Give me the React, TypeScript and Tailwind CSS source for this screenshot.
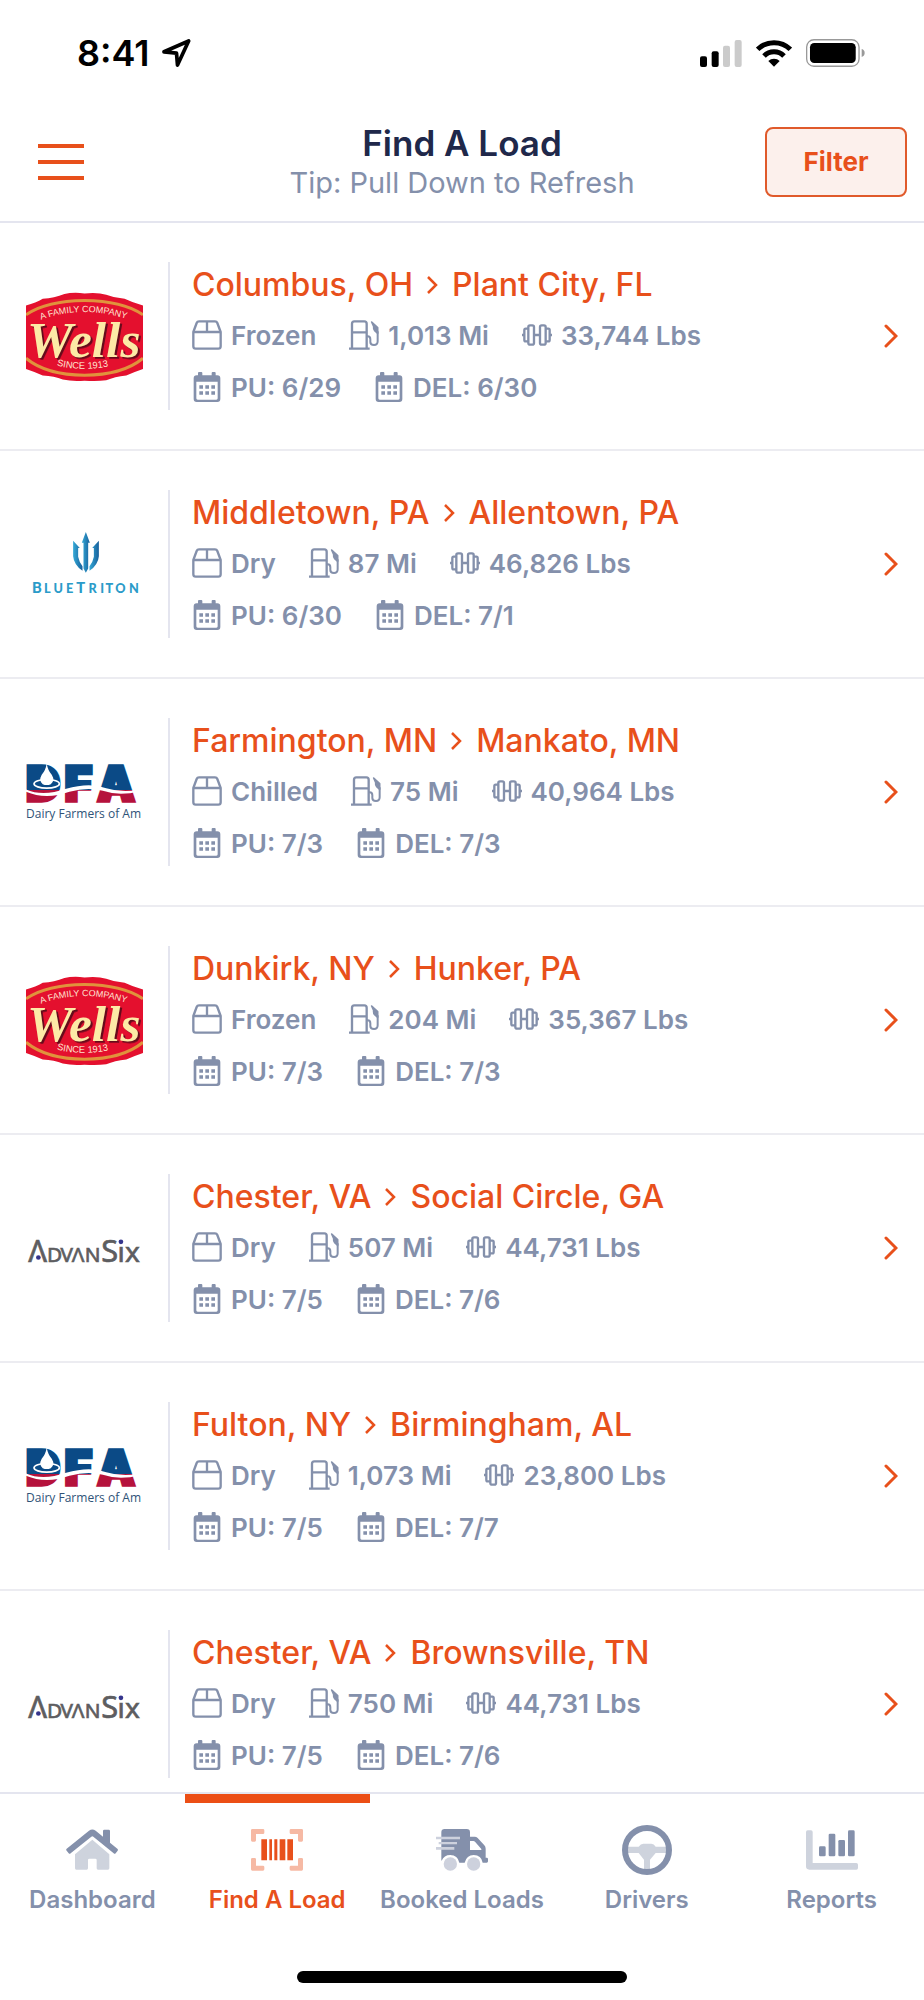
import type { ReactNode } from "react"

type Brand = "wells" | "bluetriton" | "dfa" | "advansix"

interface Load {
  brand: Brand
  from: string
  to: string
  kind: string
  miles: string
  weight: string
  pickup: string
  delivery: string
}

const loads: Load[] = [
  { brand: "wells", from: "Columbus, OH", to: "Plant City, FL", kind: "Frozen", miles: "1,013", weight: "33,744", pickup: "6/29", delivery: "6/30" },
  { brand: "bluetriton", from: "Middletown, PA", to: "Allentown, PA", kind: "Dry", miles: "87", weight: "46,826", pickup: "6/30", delivery: "7/1" },
  { brand: "dfa", from: "Farmington, MN", to: "Mankato, MN", kind: "Chilled", miles: "75", weight: "40,964", pickup: "7/3", delivery: "7/3" },
  { brand: "wells", from: "Dunkirk, NY", to: "Hunker, PA", kind: "Frozen", miles: "204", weight: "35,367", pickup: "7/3", delivery: "7/3" },
  { brand: "advansix", from: "Chester, VA", to: "Social Circle, GA", kind: "Dry", miles: "507", weight: "44,731", pickup: "7/5", delivery: "7/6" },
  { brand: "dfa", from: "Fulton, NY", to: "Birmingham, AL", kind: "Dry", miles: "1,073", weight: "23,800", pickup: "7/5", delivery: "7/7" },
  { brand: "advansix", from: "Chester, VA", to: "Brownsville, TN", kind: "Dry", miles: "750", weight: "44,731", pickup: "7/5", delivery: "7/6" },
]

function BoxIcon() {
  return (
    <svg viewBox="0 0 90 90" className="size-[30px] shrink-0" fill="none" stroke="currentColor" strokeWidth="7" strokeLinejoin="round" aria-hidden="true">
      <path d="M4 36 L14 9 Q16 4 21 4 H69 Q74 4 76 9 L86 36 V79 Q86 86 79 86 H11 Q4 86 4 79 Z" />
      <path d="M4 36 H86 M45 4 V36" />
    </svg>
  )
}

function FuelIcon() {
  return (
    <svg viewBox="0 0 90 90" className="size-[30px] shrink-0" fill="none" stroke="currentColor" strokeWidth="7" strokeLinejoin="round" aria-hidden="true">
      <path d="M9 86 V11 Q9 4 16 4 H46 Q53 4 53 11 V86 M9 37 H53 M0 86 H62" />
      <path d="M53 49 H56 Q64 49 64 58 V66 Q64 75 75 75 Q86 75 86 64 V34" strokeWidth="6" />
      <path d="M68 6 L86 23 V40 L77 32 Q73 28 74 19 Z" fill="currentColor" strokeWidth="5" />
    </svg>
  )
}

function WeightIcon() {
  return (
    <svg viewBox="0 0 90 90" className="size-[30px] shrink-0" fill="none" stroke="currentColor" strokeWidth="7" aria-hidden="true">
      <rect x="19" y="16" width="17" height="58" rx="5" />
      <rect x="54" y="16" width="17" height="58" rx="5" />
      <path d="M19 26 H11 Q7 26 7 31 V59 Q7 64 11 64 H19 M71 26 H79 Q83 26 83 31 V59 Q83 64 79 64 H71 M0 45 H7 M36 45 H54 M83 45 H90" />
    </svg>
  )
}

function CalendarIcon() {
  return (
    <svg viewBox="0 0 90 90" className="size-[30px] shrink-0" fill="currentColor" aria-hidden="true">
      <path
        fillRule="evenodd"
        d="M22 0 h6 q3 0 3 3 v7 h28 v-7 q0 -3 3 -3 h6 q3 0 3 3 v7 h5 q9 0 9 9 v62 q0 9 -9 9 h-62 q-9 0 -9 -9 v-62 q0 -9 9 -9 h4 v-7 q0 -3 3 -3 Z M13 29 V79 q0 4 4 4 h56 q4 0 4 -4 V29 Z"
      />
      <path d="M22 40 h11 v10 h-11Z M40 40 h11 v10 h-11Z M58 40 h11 v10 h-11Z M22 58 h11 v10 h-11Z M40 58 h11 v10 h-11Z M58 58 h11 v10 h-11Z" />
    </svg>
  )
}

function WellsLogo() {
  return (
    <svg viewBox="0 0 350 350" className="size-full" role="img" aria-label="Wells">
      <defs>
        <path id="wells-top" d="M45 125 Q175 76 325 130" />
        <path id="wells-bottom" d="M92 262 Q172 282 270 260" />
      </defs>
      <path fill="#e4102e" d="M0 82 Q30 74 50 62 Q85 60 115 48 Q140 42 175 46 Q215 42 240 50 Q265 60 295 62 Q320 74 350 82 V272 Q320 282 300 292 Q265 296 240 306 Q210 310 175 307 Q140 310 110 304 Q85 294 50 292 Q25 280 0 272 Z" />
      <path fill="none" stroke="#e0923c" strokeWidth="9" d="M0 110 Q60 68 175 67 Q290 68 350 110 M0 240 Q60 290 175 291 Q290 290 350 240" />
      <text fill="#ffe3d0" fontSize="27" className="font-['Liberation_Sans']">
        <textPath href="#wells-top">A FAMILY COMPANY</textPath>
      </text>
      <text x="3" y="235" fill="#fdeaa6" fontSize="154" fontWeight="700" fontStyle="italic" className="font-['Liberation_Serif'] drop-shadow-[6px_5px_0_#650b1b]">Wells</text>
      <text fill="#ffe3d0" fontSize="28" className="font-['Liberation_Sans']">
        <textPath href="#wells-bottom">SINCE 1913</textPath>
      </text>
    </svg>
  )
}

function BlueTritonLogo() {
  return (
    <svg viewBox="0 0 350 350" className="size-full" role="img" aria-label="BlueTriton">
      <defs>
        <linearGradient id="triton" x1="0" x2="1">
          <stop offset="0" stopColor="#35a9d6" />
          <stop offset="1" stopColor="#17609c" />
        </linearGradient>
      </defs>
      <g fill="url(#triton)">
        <path d="M179 78 L191 110 H186 V187 L179 200 L172 187 V110 H167 Z" />
        <path d="M141 104 L161 126 H156 V152 Q159 168 169 180 V194 Q143 175 141 150 Z" />
        <path d="M218 104 L198 126 H203 V152 Q200 168 190 180 V194 Q216 175 218 150 Z" />
      </g>
      <g fill="#2b9bc9" fontWeight="900" className="font-['Lato']">
        <text x="18" y="259" fontSize="44">B</text>
        <text x="54" y="259" fontSize="38">L</text>
        <text x="82" y="259" fontSize="38">U</text>
        <text x="120" y="259" fontSize="38">E</text>
        <text x="150" y="259" fontSize="44">T</text>
        <text x="187" y="259" fontSize="38">R</text>
        <text x="222" y="259" fontSize="38">I</text>
        <text x="238" y="259" fontSize="38">T</text>
        <text x="267" y="259" fontSize="38">O</text>
        <text x="308" y="259" fontSize="38">N</text>
      </g>
    </svg>
  )
}

function DfaLogo() {
  return (
    <svg viewBox="0 0 350 350" className="size-full" role="img" aria-label="Dairy Farmers of America">
      <defs>
        <linearGradient id="dfa" x1="0" y1="92" x2="0" y2="212" gradientUnits="userSpaceOnUse">
          <stop offset="0.62" stopColor="#0b4a86" />
          <stop offset="0.62" stopColor="#b5123c" />
        </linearGradient>
      </defs>
      <path fill="url(#dfa)" d="M30 100 H62 Q84 110 84 150 Q84 190 62 200 H30 Z" />
      <g fill="url(#dfa)" stroke="url(#dfa)" strokeWidth="10" fontSize="142" fontWeight="900" className="font-['Inter']">
        <text x="0" y="201">D</text>
        <text x="115" y="201">F</text>
        <text x="213" y="201">A</text>
      </g>
      <path fill="#fff" d="M0 166 Q50 188 120 164 Q190 144 240 162 Q290 177 340 166 V171 Q280 187 230 170 Q185 157 130 173 Q60 198 0 173 Z" />
      <path fill="none" stroke="#fff" strokeWidth="5" d="M24 149 a38 13 0 1 0 76 0 a38 13 0 1 0 -76 0" />
      <path fill="#fff" d="M62 88 Q65 108 77 122 Q88 140 74 150 Q62 155 50 150 Q37 140 47 122 Q59 108 62 88 Z" />
      <text x="0" y="251" fill="#2f5378" fontSize="36" fontWeight="500" className="font-['Open_Sans']">Dairy Farmers of Am</text>
    </svg>
  )
}

function AdvanSixLogo() {
  return (
    <svg viewBox="0 0 350 350" className="size-full" role="img" aria-label="AdvanSix">
      <g fill="#5d5d60" stroke="#5d5d60" strokeWidth="2" className="font-['Noto_Sans']">
        <text x="7" y="215" fontSize="92">Λ</text>
        <text x="63" y="215" fontSize="62">D</text>
        <text x="103" y="215" fontSize="62">V</text>
        <text x="137" y="215" fontSize="62">Λ</text>
        <text x="176" y="215" fontSize="62">N</text>
        <text x="225" y="215" fontSize="92">S</text>
        <text x="274" y="215" fontSize="84">ı</text>
        <text x="296" y="215" fontSize="84">x</text>
      </g>
      <circle cx="37" cy="202" r="7" fill="#34348c" />
      <circle cx="284" cy="155" r="7" fill="#34348c" />
    </svg>
  )
}

const logos: Record<Brand, () => ReactNode> = {
  wells: WellsLogo,
  bluetriton: BlueTritonLogo,
  dfa: DfaLogo,
  advansix: AdvanSixLogo,
}

function Meta({ icon, children }: { icon: ReactNode; children: ReactNode }) {
  return (
    <span className="flex items-center gap-[9px]">
      {icon}
      <span>{children}</span>
    </span>
  )
}

function LoadRow({ load }: { load: Load }) {
  const Logo = logos[load.brand]
  return (
    <li className="border-b-2 border-[#ececf1]">
      <a href="#load" className="flex items-center py-[39px] pr-[26px] pl-[26px]">
        <span className="flex size-[117px] shrink-0 items-center justify-center">
          <Logo />
        </span>
        <span className="ml-[25px] h-[148px] w-[2px] shrink-0 bg-[#e4e5ef]" />
        <span className="ml-[22px] flex min-w-0 flex-1 flex-col whitespace-nowrap">
          <span className="flex items-center gap-[14px] text-[32px] leading-[46px] font-medium text-[#e8501b]">
            <span>{load.from}</span>
            <svg viewBox="0 0 11 18" className="h-[18px] w-[11px]" fill="none" stroke="currentColor" strokeWidth="2.5" aria-hidden="true">
              <path d="M1 1 L9 9 L1 17" />
            </svg>
            <span>{load.to}</span>
          </span>
          <span className="flex h-[54px] items-center gap-[33px] text-[26px] font-semibold text-[#8490ab]">
            <Meta icon={<BoxIcon />}>{load.kind}</Meta>
            <Meta icon={<FuelIcon />}>{load.miles} Mi</Meta>
            <Meta icon={<WeightIcon />}>{load.weight} Lbs</Meta>
          </span>
          <span className="flex h-[48px] items-center gap-[33px] pt-[2px] text-[26px] font-semibold text-[#8490ab]">
            <Meta icon={<CalendarIcon />}>PU: {load.pickup}</Meta>
            <Meta icon={<CalendarIcon />}>DEL: {load.delivery}</Meta>
          </span>
        </span>
        <svg viewBox="0 0 14 24" className="h-[24px] w-[14px] shrink-0" fill="none" stroke="#e8501b" strokeWidth="3" strokeLinecap="round" aria-hidden="true">
          <path d="M2 2 L12 12 L2 22" />
        </svg>
      </a>
    </li>
  )
}

function StatusBar() {
  return (
    <div className="flex h-[106px] items-center justify-between pr-[59px] pl-[77px]">
      <div className="flex items-center gap-[12px]">
        <span className="text-[36px] leading-[44px] font-semibold text-black">8:41</span>
        <svg viewBox="0 0 86 83" className="h-[28px] w-[29px]" fill="none" stroke="#000" strokeWidth="11" strokeLinejoin="round" aria-hidden="true">
          <path d="M6 38 L79 6 L46 77 L43 42 Z" />
        </svg>
      </div>
      <div className="flex items-center gap-[14px]">
        <svg viewBox="0 0 126 81" className="h-[27px] w-[42px]" aria-hidden="true">
          <rect x="0" y="49" width="21" height="32" rx="6" />
          <rect x="35" y="34" width="21" height="47" rx="6" />
          <rect x="69" y="17" width="21" height="64" rx="6" fill="#cbcbcb" />
          <rect x="104" y="0" width="21" height="81" rx="6" fill="#cbcbcb" />
        </svg>
        <svg viewBox="0 0 108 81" className="h-[27px] w-[36px]" fill="none" stroke="#000" strokeWidth="15" aria-hidden="true">
          <path d="M5 28 A70 70 0 0 1 103 28 M24 48 A42 42 0 0 1 84 48" />
          <path d="M54 80 L37 63 A24 24 0 0 1 71 63 Z" fill="#000" stroke="none" />
        </svg>
        <svg viewBox="0 0 178 84" className="h-[28px] w-[59px]" aria-hidden="true">
          <rect x="2" y="2" width="158" height="80" rx="22" fill="none" stroke="#999" strokeWidth="4" />
          <rect x="12" y="12" width="138" height="60" rx="13" />
          <path d="M168 30 Q177 33 177 42 Q177 51 168 54 Z" fill="#999" />
        </svg>
      </div>
    </div>
  )
}

function HomeIcon() {
  return (
    <svg viewBox="0 0 156 126" className="h-[42px] w-[52px]" fill="currentColor" aria-hidden="true">
      <path opacity=".4" d="M79 32 L130 76 V118 Q130 122 126 122 H96 Q92 122 92 118 V93 Q92 89 88 89 H70 Q66 89 66 93 V118 Q66 122 62 122 H31 Q27 122 27 118 V76 Z" />
      <path d="M69 5 Q79 -2 89 5 L111 23 V6 Q111 2 115 2 H128 Q132 2 132 6 V41 L154 59 Q157 62 155 65 L149 73 Q146 76 143 73 L82 23 Q79 21 76 23 L14 73 Q11 76 8 73 L2 65 Q-1 62 2 59 Z" />
    </svg>
  )
}

function BarcodeIcon() {
  return (
    <svg viewBox="0 0 156 126" className="h-[42px] w-[52px]" fill="currentColor" aria-hidden="true">
      <path
        opacity=".4"
        d="M4 0 H36 Q40 0 40 4 V11 Q40 15 36 15 H15 V34 Q15 38 11 38 H4 Q0 38 0 34 V4 Q0 0 4 0 Z M152 0 H120 Q116 0 116 4 V11 Q116 15 120 15 H141 V34 Q141 38 145 38 H152 Q156 38 156 34 V4 Q156 0 152 0 Z M4 125 H36 Q40 125 40 121 V114 Q40 110 36 110 H15 V91 Q15 87 11 87 H4 Q0 87 0 91 V121 Q0 125 4 125 Z M152 125 H120 Q116 125 116 121 V114 Q116 110 120 110 H141 V91 Q141 87 145 87 H152 Q156 87 156 91 V121 Q156 125 152 125 Z"
      />
      <path d="M31 31 h17 v63 h-17Z M55 31 h8 v63 h-8Z M70 31 h9 v63 h-9Z M86 31 h17 v63 h-17Z M109 31 h17 v63 h-17Z" />
    </svg>
  )
}

function TruckIcon() {
  return (
    <svg viewBox="0 0 156 126" className="h-[42px] w-[52px]" fill="currentColor" aria-hidden="true">
      <path
        fillRule="evenodd"
        d="M26 0 H92 Q102 0 102 10 V23 H116 Q121 23 125 27 L145 49 Q149 53 149 59 V86 H152 Q156 86 156 90 V97 Q156 101 152 101 H140 Q136 78 113 78 Q92 78 86 101 H70 Q65 78 43 78 Q24 78 17 95 L16 94 V10 Q16 0 26 0 Z M102 36 V63 H136 V60 L117 38 Q115 36 112 36 Z"
      />
      <path fill="#cdd1dd" d="M0 23 H72 V31 H0Z M8 39 H63 V46 H8Z M0 54 H55 V62 H0Z" />
      <circle cx="43" cy="105" r="20" fill="#cdd1dd" />
      <circle cx="113" cy="105" r="20" fill="#cdd1dd" />
    </svg>
  )
}

function WheelIcon() {
  return (
    <svg viewBox="0 0 150 150" className="size-[50px]" fill="none" aria-hidden="true">
      <path fill="currentColor" opacity=".4" d="M18 65 H50 Q56 56 64 56 H88 Q96 56 101 65 H132 V84 H101 L84 104 V136 H66 V104 L50 84 H18 Z" />
      <circle cx="75" cy="75" r="66" stroke="currentColor" strokeWidth="18" />
    </svg>
  )
}

function ChartIcon() {
  return (
    <svg viewBox="0 0 156 126" className="h-[42px] w-[52px]" fill="currentColor" aria-hidden="true">
      <path opacity=".4" d="M5 4 H15 Q20 4 20 9 V102 H151 Q156 102 156 107 V117 Q156 122 151 122 H10 Q0 122 0 112 V9 Q0 4 5 4 Z" />
      <rect x="39" y="52" width="20" height="30" rx="4" />
      <rect x="68" y="14" width="20" height="68" rx="4" />
      <rect x="97" y="33" width="20" height="49" rx="4" />
      <rect x="126" y="4" width="20" height="78" rx="4" />
    </svg>
  )
}

const tabs = [
  { label: "Dashboard", icon: <HomeIcon /> },
  { label: "Find A Load", icon: <BarcodeIcon />, active: true },
  { label: "Booked Loads", icon: <TruckIcon /> },
  { label: "Drivers", icon: <WheelIcon /> },
  { label: "Reports", icon: <ChartIcon /> },
]

export default function App() {
  return (
    <div className="flex h-screen flex-col bg-white font-['Inter','Liberation_Sans',sans-serif]">
      <StatusBar />

      <header className="grid h-[117px] grid-cols-[1fr_auto_1fr] items-center border-b-2 border-[#e4e5ef] px-[17px] pb-[4px]">
        <button type="button" aria-label="Menu" className="ml-[21px] flex w-[46px] flex-col gap-[12px]">
          <span className="h-[4px] bg-[#e8501b]" />
          <span className="h-[4px] bg-[#e8501b]" />
          <span className="h-[4px] bg-[#e8501b]" />
        </button>
        <div className="pt-[2px] text-center">
          <h1 className="text-[35px] leading-[40px] font-semibold text-[#20284a]">Find A Load</h1>
          <p className="text-[29px] leading-[40px] text-[#8490ab]">Tip: Pull Down to Refresh</p>
        </div>
        <button type="button" className="h-[70px] w-[142px] justify-self-end rounded-lg border-2 border-[#e05a2b] bg-[#fcf0ec] text-[26px] font-bold text-[#e8501b]">
          Filter
        </button>
      </header>

      <main className="min-h-0 flex-1 overflow-y-auto [scrollbar-width:none]">
        <ul>
          {loads.map((load, i) => (
            <LoadRow key={i} load={load} />
          ))}
        </ul>
      </main>

      <nav className="border-t-2 border-[#e4e5ef]">
        <div className="flex">
          {tabs.map((tab) => (
            <a
              key={tab.label}
              href="#tab"
              aria-current={tab.active ? "page" : undefined}
              className={
                tab.active
                  ? "flex flex-1 basis-0 flex-col items-center border-t-[9px] border-[#ec4f16] pt-[22px] text-[#e8501b]"
                  : "flex flex-1 basis-0 flex-col items-center border-t-[9px] border-transparent pt-[22px] text-[#8490ab]"
              }
            >
              <span className="flex h-[50px] items-center">{tab.icon}</span>
              <span className="mt-[8px] text-[24px] leading-[34px] font-semibold whitespace-nowrap">{tab.label}</span>
            </a>
          ))}
        </div>
        <div className="mx-auto mt-[54px] mb-[17px] h-[12px] w-[330px] rounded-full bg-black" />
      </nav>
    </div>
  )
}
